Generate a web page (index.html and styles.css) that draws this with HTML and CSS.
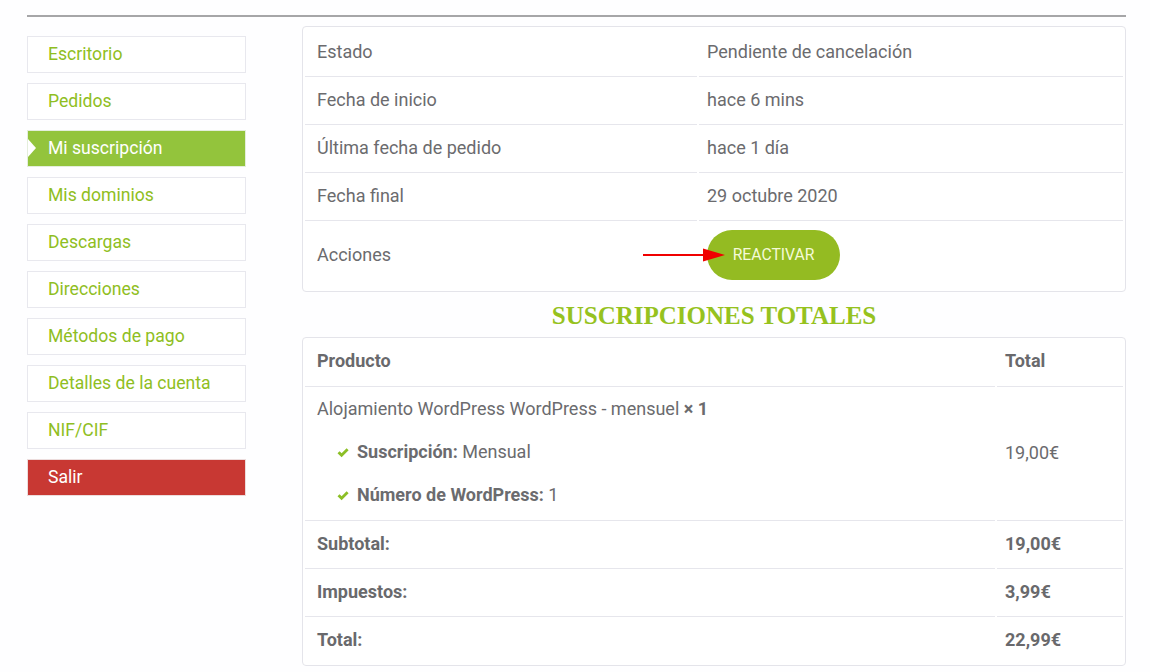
FILE: index.html
```html
<!DOCTYPE html>
<html lang="es">
<head>
<meta charset="utf-8">
<title>Mi suscripción</title>
<link rel="stylesheet" href="styles.css">
</head>
<body>
<div class="page">
  <div class="topline"></div>
  <div class="layout">
    <nav class="sidebar">
      <a class="nav-item">Escritorio</a>
      <a class="nav-item">Pedidos</a>
      <a class="nav-item active">Mi suscripción</a>
      <a class="nav-item">Mis dominios</a>
      <a class="nav-item">Descargas</a>
      <a class="nav-item">Direcciones</a>
      <a class="nav-item">Métodos de pago</a>
      <a class="nav-item">Detalles de la cuenta</a>
      <a class="nav-item">NIF/CIF</a>
      <a class="nav-item logout">Salir</a>
    </nav>
    <main class="main">
      <div class="card first">
        <table class="details">
          <tr><td class="k">Estado</td><td class="v">Pendiente de cancelación</td></tr>
          <tr><td class="k">Fecha de inicio</td><td class="v">hace 6 mins</td></tr>
          <tr><td class="k">Última fecha de pedido</td><td class="v">hace 1 día</td></tr>
          <tr><td class="k">Fecha final</td><td class="v">29 octubre 2020</td></tr>
          <tr class="actions"><td class="k">Acciones</td><td class="v"><span class="btn-wrap"><svg class="arrow" width="84" height="14" viewBox="0 0 84 14"><line x1="0" y1="7" x2="64" y2="7" stroke="#f00000" stroke-width="2"/><polygon points="60,0.5 82,7 60,13.5" fill="#f00000"/></svg><button class="btn">REACTIVAR</button></span></td></tr>
        </table>
      </div>
      <h2 class="title">SUSCRIPCIONES TOTALES</h2>
      <div class="card">
        <table class="totals">
          <thead>
            <tr><th class="c1">Producto</th><th class="c2">Total</th></tr>
          </thead>
          <tbody>
            <tr class="product">
              <td class="c1">
                <div class="pname">Alojamiento WordPress WordPress - mensuel <strong>× 1</strong></div>
                <ul class="meta">
                  <li><svg class="check" width="12" height="10" viewBox="0 0 12 10"><path d="M0.5 5.2 L2.6 3.2 L4.6 5.2 L9.6 0.3 L11.6 2.3 L4.6 9.3 Z" fill="#8cbf26"/></svg><strong>Suscripción:</strong> Mensual</li>
                  <li><svg class="check" width="12" height="10" viewBox="0 0 12 10"><path d="M0.5 5.2 L2.6 3.2 L4.6 5.2 L9.6 0.3 L11.6 2.3 L4.6 9.3 Z" fill="#8cbf26"/></svg><strong>Número de WordPress:</strong> 1</li>
                </ul>
              </td>
              <td class="c2 price">19,00€</td>
            </tr>
            <tr class="sum"><th class="c1">Subtotal:</th><th class="c2">19,00€</th></tr>
            <tr class="sum"><th class="c1">Impuestos:</th><th class="c2">3,99€</th></tr>
            <tr class="sum last"><th class="c1">Total:</th><th class="c2">22,99€</th></tr>
          </tbody>
        </table>
      </div>
    </main>
  </div>
</div>
</body>
</html>
```

FILE: styles.css
```css
* { box-sizing: border-box; }
html, body { margin: 0; padding: 0; background: #fefeff; }
body {
  font-family: Roboto, "Liberation Sans", sans-serif;
  color: #6b6b6e;
  font-size: 18px;
}
.page { width: 1150px; padding: 15px 24px 0 27px; }
.topline { height: 2px; background: #a6a6a8; }
.layout { display: flex; margin-top: 9px; }
.sidebar {
  width: 219px;
  flex: none;
  display: flex;
  flex-direction: column;
  gap: 10px;
  padding-top: 10px;
}
.nav-item {
  position: relative;
  display: block;
  height: 37px;
  line-height: 34px;
  border: 1px solid #e8e8ee;
  padding-left: 20px;
  color: #8fbe22;
  font-size: 17.6px;
  text-decoration: none;
  background: #fff;
}
.nav-item.active {
  background: #93c43c;
  border-color: #e4eedc;
  color: #fff;
}
.nav-item.active::before {
  content: "";
  position: absolute;
  left: 0;
  top: 8px;
  border-left: 8px solid #fff;
  border-top: 9px solid transparent;
  border-bottom: 9px solid transparent;
}
.nav-item.logout {
  background: #c83833;
  border-color: #ecdcdc;
  color: #fff;
}
.main { margin-left: 56px; width: 824px; }
.card {
  border: 1px solid #e4e4ea;
  border-radius: 4px;
  padding: 0 2px;
  background: #fff;
}
.card.first { padding-top: 2px; }
table { border-collapse: separate; border-spacing: 2px 0; margin: 0 -2px; width: calc(100% + 4px); }
td, th { text-align: left; vertical-align: middle; }
.details td {
  height: 48px;
  padding-bottom: 4px;
  border-bottom: 1px solid #e6e6ec;
  font-size: 18px;
}
.details td.k { width: 392px; padding-left: 12px; }
.details td.v { padding-left: 8px; }
.details tr.actions td { height: 70px; border-bottom: none; padding-bottom: 4px; }
.btn-wrap { position: relative; display: inline-block; vertical-align: middle; }
.arrow { position: absolute; left: -64px; top: 18px; z-index: 2; }
.btn {
  display: block;
  width: 133px;
  height: 50px;
  border: none;
  border-radius: 25px;
  background: #94bb22;
  color: #f4fad8;
  font-family: Roboto, "Liberation Sans", sans-serif;
  font-size: 15.7px;
  padding: 0;
  margin-left: 0;
}
.title {
  margin: 0;
  height: 45px;
  line-height: 48px;
  text-align: center;
  font-family: "Liberation Serif", serif;
  font-weight: bold;
  font-size: 25px;
  color: #96c21e;
}
.totals th, .totals td { border-bottom: 1px solid #e6e6ec; font-size: 18px; padding-bottom: 4px; }
.totals th { font-weight: bold; color: #69696c; height: 48px; }
.totals thead th { height: 49px; }
.totals .c1 { width: 690px; padding-left: 12px; }
.totals .c2 { padding-left: 8px; }
.totals tr.last th { border-bottom: none; }
.product td.c1 { padding-top: 10px; padding-bottom: 13px; }
.pname, .meta li { line-height: 24px; }
.pname strong, .meta strong { font-weight: bold; }
.meta { list-style: none; margin: 0; padding: 0 0 0 20px; }
.meta li { margin-top: 19px; }
.check { margin-right: 8px; vertical-align: 0; }
```
